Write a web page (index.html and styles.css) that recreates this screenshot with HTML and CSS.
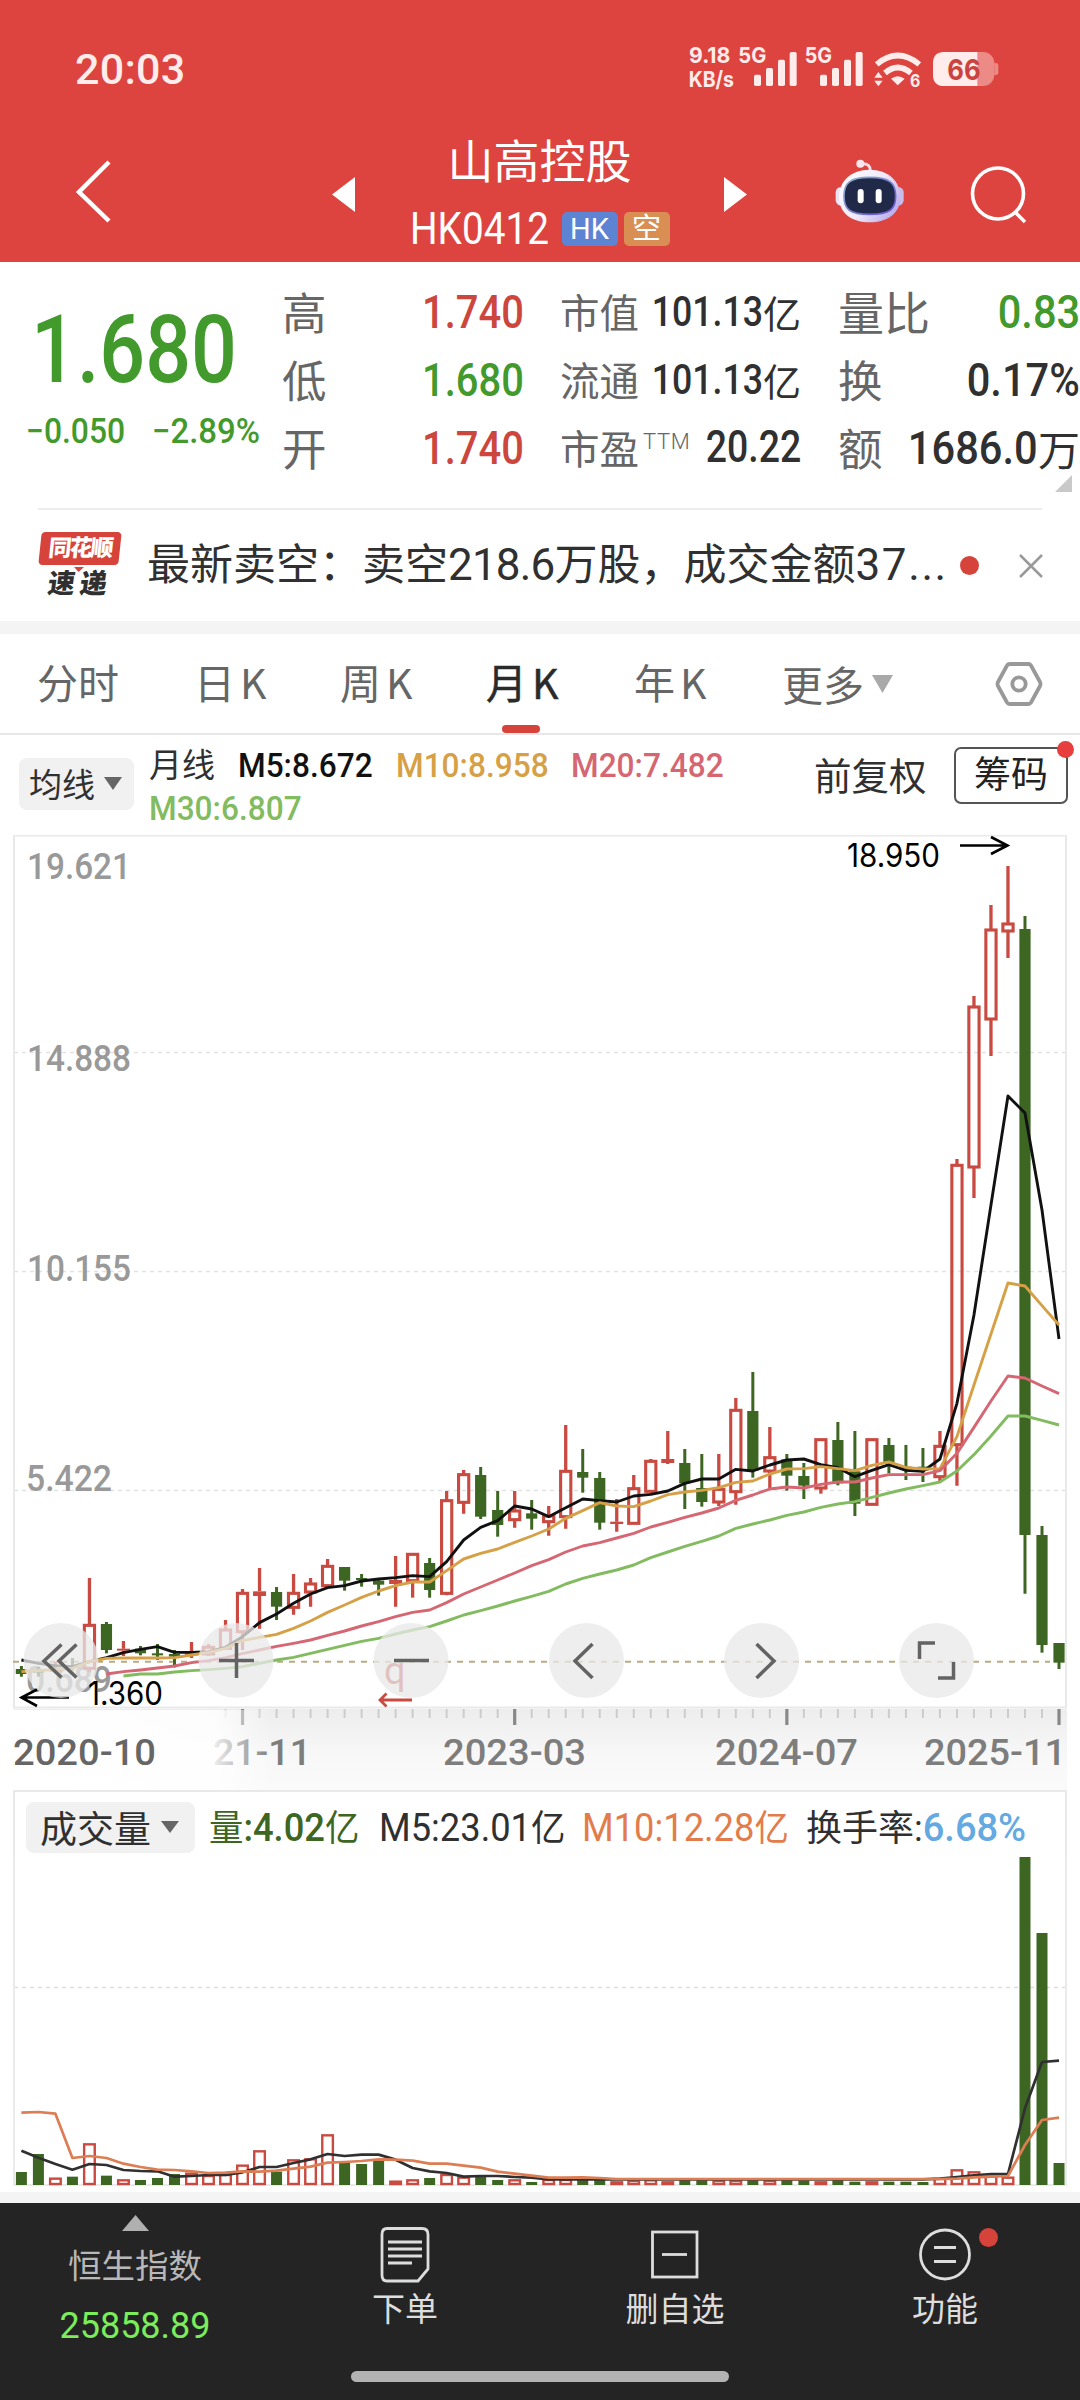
FILE: index.html
```html
<!DOCTYPE html>
<html lang="zh-CN">
<head>
<meta charset="utf-8">
<title>山高控股 HK0412</title>
<link rel="stylesheet" href="styles.css">
</head>
<body>
<header class="header">
  <div class="status">
    <span class="time">20:03</span>
    <svg class="status-icons" width="314" height="46" viewBox="141 42 942 138" fill="#ffeceb">
      <g class="status-text">
        <text x="147" y="100" textLength="124">9.18</text>
        <text x="146" y="170" textLength="136">KB/s</text>
        <text x="295" y="100" textLength="84">5G</text>
        <text x="494" y="100" textLength="82">5G</text>
      </g>
      <g id="bars"><rect x="342" y="134" width="21" height="34" rx="5"/><rect x="378" y="114" width="21" height="54" rx="5"/><rect x="414" y="89" width="21" height="79" rx="5"/><rect x="449" y="66" width="21" height="102" rx="5"/></g>
      <use href="#bars" x="198"/>
      <g fill="none" stroke="#ffeceb" stroke-width="17">
        <path d="M710 103Q773 50 838 103"/><path d="M735 129Q773 96 813 129"/>
      </g>
      <path d="M753 146Q773 131 794 146L773 166ZM703 143L715 126L728 143ZM703 152L715 169L728 152Z"/>
      <text class="wifi-six" x="810" y="172" textLength="31">6</text>
      <rect x="879" y="66" width="184" height="102" rx="34" fill="#ec8a86"/>
      <path d="M1063 99h5q7 0 7 8v20q0 8-7 8h-5z" fill="#ec8a86"/>
      <path d="M1012 66H913Q879 66 879 100V134Q879 168 913 168H1012Z"/>
      <text class="battery" x="922" y="149" textLength="100">66</text>
    </svg>
  </div>
  <div class="nav">
    <svg class="back" width="40" height="66" viewBox="0 0 40 66"><path d="M36 4L6 34L36 63" fill="none" stroke="#fff" stroke-width="4.5"/></svg>
    <svg class="prev" width="23" height="35"><path d="M23 0V35L0 17.500Z" fill="#fff"/></svg>
    <div class="title">
      <div class="name">山高控股</div>
      <div class="code"><span class="code-text">HK0412</span><span class="badge hk">HK</span><span class="badge short">空</span></div>
    </div>
    <svg class="next" width="23" height="35"><path d="M0 0V35L23 17.500Z" fill="#fff"/></svg>
    <svg class="robot" width="70" height="64" viewBox="586 388 210 192">
      <defs>
        <linearGradient id="shell" x2="1" y2=".6"><stop offset="0" stop-color="#fff"/><stop offset=".6" stop-color="#f0e9f8"/><stop offset="1" stop-color="#bfb2ec"/></linearGradient>
        <linearGradient id="rim" x2="1" y2="1"><stop offset="0" stop-color="#8eb3c9"/><stop offset="1" stop-color="#6650d2"/></linearGradient>
      </defs>
      <path d="M692 424Q693 402 668 402" fill="none" stroke="#f5dfe8" stroke-width="9"/>
      <circle cx="662" cy="402" r="12" fill="#f8e6ee"/>
      <rect x="588" y="472" width="34" height="56" rx="16" fill="#e9e3f4"/><rect x="758" y="472" width="34" height="56" rx="16" fill="#c8bde8"/>
      <path d="M690 420C746 420 782 455 782 502C782 552 742 578 690 578C638 578 598 552 598 502C598 455 634 420 690 420Z" fill="url(#shell)"/>
      <path d="M690 443C750 443 768 460 768 499C768 540 750 554 690 554C630 554 613 540 613 499C613 460 630 443 690 443Z" fill="#212948" stroke="url(#rim)" stroke-width="5"/>
      <rect x="654" y="478" width="18" height="43" rx="9" fill="#fff"/><rect x="708" y="478" width="18" height="43" rx="9" fill="#fff"/>
    </svg>
    <svg class="search" width="58" height="58" viewBox="0 0 58 58" fill="none" stroke="#fff" stroke-width="3.6"><circle cx="28" cy="27.500" r="25.500"/><path d="M45 46L55 56"/></svg>
  </div>
</header>

<section class="quote">
  <div class="price">
    <div class="last"><span class="fit">1.680</span></div>
    <div class="change"><span class="fit">−0.050</span><span class="fit">−2.89%</span></div>
  </div>
  <dl class="stats wide">
    <dt>高</dt><dd class="up"><span class="fit">1.740</span></dd>
    <dt>低</dt><dd class="down"><span class="fit">1.680</span></dd>
    <dt>开</dt><dd class="up"><span class="fit">1.740</span></dd>
  </dl>
  <dl class="stats mid">
    <dt>市值</dt><dd><span class="fit">101.13</span><i>亿</i></dd>
    <dt>流通</dt><dd><span class="fit">101.13</span><i>亿</i></dd>
    <dt>市盈<sup>TTM</sup></dt><dd class="pe"><span class="fit">20.22</span></dd>
  </dl>
  <dl class="stats last-col">
    <dt>量比</dt><dd class="down"><span class="fit">0.83</span></dd>
    <dt>换</dt><dd><span class="fit">0.17%</span></dd>
    <dt>额</dt><dd><span class="fit">1686.0</span><i>万</i></dd>
  </dl>
  <svg class="corner" width="17" height="17"><path d="M17 0V17H0Z" fill="#c9c9c9"/></svg>
</section>

<section class="news">
  <div class="news-logo"><div class="logo-top">同花顺</div><div class="logo-bottom">速递</div></div>
  <span class="headline">最新卖空：卖空<b>218.6</b>万股，成交金额<b class="amount">37...</b></span>
  <span class="dot"></span>
  <svg class="close" width="24" height="24"><path d="M1 1L23 23M23 1L1 23" stroke="#999" stroke-width="2.500"/></svg>
</section>

<nav class="tabs">
  <span>分时</span><span>日K</span><span>周K</span><span class="active">月K</span><span>年K</span>
  <span class="more">更多<svg width="21" height="18"><path d="M0 0H21L10.500 18Z" fill="#a9a9a9"/></svg></span>
  <svg class="gear" width="48" height="46" viewBox="0 0 48 46" fill="none" stroke="#999" stroke-width="3.800"><path d="M14.500 3H33.500Q35 3 36 4.500L45 21Q46 23 45 25L36 41.500Q35 43 33.500 43H14.500Q13 43 12 41.500L3 25Q2 23 3 21L12 4.500Q13 3 14.500 3Z"/><circle cx="24" cy="23" r="6.700"/></svg>
</nav>

<section class="indicators">
  <div class="chip ma-chip">均线<svg width="18" height="13"><path d="M0 0H18L9 13Z" fill="#666"/></svg></div>
  <div class="ma-list">
    <span class="period">月线</span><span class="ma ma5">M5:8.672</span><span class="ma ma10">M10:8.958</span><span class="ma ma20">M20:7.482</span><span class="ma ma30">M30:6.807</span>
  </div>
  <span class="adjust">前复权</span>
  <div class="chips-btn">筹码<i class="dot"></i></div>
</section>

<svg class="chart" width="1080" height="955" viewBox="0 835 1080 955">
  <defs>
    <linearGradient id="shade" x1="0" x2="0" y1="0" y2="1"><stop offset="0" stop-color="#ededed"/><stop offset=".6" stop-color="#f8f8f8"/><stop offset="1" stop-color="#fafafa"/></linearGradient>
    <linearGradient id="fade"><stop offset="0" stop-color="#fff"/><stop offset=".78" stop-color="#fff" stop-opacity=".85"/><stop offset="1" stop-color="#fff" stop-opacity="0"/></linearGradient>
  </defs>
  <rect x="14" y="1709" width="1053" height="81" fill="url(#shade)"/>
  <g stroke="#e2e2e2" stroke-width="1.500" stroke-dasharray="4 4"><path d="M14 1052.500H1066M14 1271.500H1066M14 1490.500H1066"/></g>
  <rect x="14" y="835.500" width="1052" height="872" fill="none" stroke="#e9e9e9" stroke-width="2"/>
  <g class="scale-labels">
    <text x="27" y="879" textLength="104">19.621</text><text x="27" y="1070.500" textLength="104">14.888</text>
    <text x="27" y="1281" textLength="104">10.155</text><text x="26" y="1490.500" textLength="86">5.422</text>
    <text x="26" y="1692" textLength="86">0.689</text>
  </g>
  <path d="M13 1661.700H1050" stroke="#b9aa85" stroke-width="2" stroke-dasharray="6 6"/>
  <g id="candles"></g>
  <g id="averages"></g>
  <g class="marks"><text x="847" y="866.500" textLength="93">18.950</text><text x="88" y="1705" textLength="75">1.360</text></g>
  <g fill="none" stroke="#000" stroke-width="2.600"><path d="M960 845.500H1007M991 837L1007.500 845.500L991 854M69 1697.500H22M37 1689.500L21.500 1697.500L37 1706"/></g>
  <text class="mark-q" x="384" y="1684">q</text>
  <path d="M412 1700H380M386.500 1693.500L380 1700L386.500 1706.500" fill="none" stroke="#c84a40" stroke-width="2.800"/>
  <g id="ticks"></g>
  <g class="dates">
    <text x="213" y="1765" textLength="98">21-11</text><text x="443" y="1765" textLength="143">2023-03</text>
    <text x="715" y="1765" textLength="143">2024-07</text><text x="924" y="1765" textLength="142">2025-11</text>
  </g>
  <rect x="12" y="1710" width="260" height="80" fill="url(#fade)"/>
  <g class="dates first"><text x="13" y="1765" textLength="143">2020-10</text></g>
  <g fill="#e8e8e8" fill-opacity=".76"><circle cx="61" cy="1660.500" r="37.500"/><circle cx="236" cy="1660.500" r="37.500"/><circle cx="411" cy="1660.500" r="37.500"/><circle cx="586.500" cy="1660.500" r="37.500"/><circle cx="761.500" cy="1660.500" r="37.500"/><circle cx="936.500" cy="1660.500" r="37.500"/></g>
  <g fill="none" stroke="#636363" stroke-width="3.500"><path d="M61.500 1644.500L44 1661L61.500 1677.500M76.500 1644.500L59 1661L76.500 1677.500M219 1660.500H254M236.500 1643V1678M394 1660.500H429M592.500 1644L575 1661L592.500 1678M756.500 1644L774 1661L756.500 1678M919.500 1659V1643H935M953.500 1662V1678H938"/></g>
</svg>

<section class="volume">
  <div class="volume-head">
    <div class="chip">成交量<svg width="18" height="12"><path d="M0 0H18L9 12Z" fill="#666"/></svg></div>
    <span class="v-now">量<b>:4.02</b>亿</span><span class="v-m5"><b>M5:23.01</b>亿</span><span class="v-m10"><b>M10:12.28</b>亿</span><span class="v-rate">换手率:<em>6.68%</em></span>
  </div>
  <svg class="volume-chart" width="1080" height="335" viewBox="0 1855 1080 335">
    <path d="M14 1987.500H1066" stroke="#ddd" stroke-width="1.500" stroke-dasharray="4 4"/>
    <path d="M14 1855V2185H1066V1855" fill="none" stroke="#ebebeb" stroke-width="2"/>
    <g id="volumes"></g>
  </svg>
</section>

<footer class="footer">
  <div class="index"><svg width="27" height="16"><path d="M0 16L13.500 0L27 16Z" fill="#b0b0b0"/></svg><span class="index-name">恒生指数</span><span class="index-value">25858.89</span></div>
  <div class="action"><svg width="54" height="60" viewBox="0 0 54 60" fill="none" stroke="#ddd" stroke-width="2.800"><path d="M9 4.500H44Q50 4.500 50 10.500V45L40 57H9Q4 57 4 51V10.500Q4 4.500 9 4.500Z"/><path d="M10 18H44M10 25H44M10 32H44M10 39H34"/></svg><span>下单</span></div>
  <div class="action"><svg width="54" height="60" viewBox="0 0 54 60" fill="none" stroke="#ddd" stroke-width="2.800"><rect x="4.500" y="8" width="44.500" height="45"/><path d="M14 30.500H39"/></svg><span>删自选</span></div>
  <div class="action"><svg width="54" height="60" viewBox="0 0 54 60" fill="none" stroke="#ddd" stroke-width="2.800"><circle cx="27" cy="30.500" r="24.500"/><path d="M16 23.500H38M16 37.500H38"/></svg><span>功能</span><i class="dot"></i></div>
  <div class="home-bar"></div>
</footer>
<script src="chart.js"></script>
</body>
</html>
```
FILE: styles.css
```css
* { box-sizing: border-box; }
body { margin: 0; width: 1080px; height: 2400px; overflow: hidden; background: #fff; color: #303030; font-family: Roboto, "Noto Sans CJK SC", sans-serif; display: flex; flex-direction: column; }
body > * { flex: none; }
svg { display: block; flex: none; }
i, em { font-style: normal; }
b { font-weight: 400; }
.fit { display: inline-block; transform: scaleX(.85); transform-origin: right center; font-weight: 500; }
.dot { display: block; width: 19px; height: 19px; border-radius: 50%; background: #d6433b; flex: none; }

.header { height: 262px; background: #dd443f; color: #fff; }
.status { height: 130px; padding: 44px 79px 0 75px; display: flex; justify-content: space-between; }
.time { font-size: 43px; line-height: 51px; font-weight: 500; letter-spacing: .3px; color: #ffeceb; }
.status-icons { overflow: visible; }
.status-text text { font: 700 66px Inter, sans-serif; }
.wifi-six { font: 700 50px Inter, sans-serif; }
.battery { font: 700 87px Inter, sans-serif; fill: #cb433e; }
.nav { height: 132px; display: flex; align-items: flex-start; }
.back { margin: 28px 0 0 73px; }
.prev { margin: 47px 0 0 219px; }
.title { width: 369px; display: flex; flex-direction: column; align-items: center; }
.name { font-size: 46px; line-height: 60px; margin-top: 2px; }
.code { display: flex; align-items: center; height: 34px; margin-top: 20px; width: 260px; }
.code-text { width: 152px; font-size: 44px; line-height: 34px; transform: scaleX(.88); transform-origin: left; }
.badge { height: 34px; border-radius: 5px; display: flex; align-items: center; justify-content: center; font-size: 29px; line-height: 34px; }
.badge.hk { width: 56px; background: #5d83d3; }
.badge.short { width: 46px; margin-left: 6px; background: #d98f54; }
.next { margin: 47px 0 0 0; }
.robot { margin: 29px 0 0 88px; }
.search { margin: 36px 0 0 65px; }

.quote { height: 246px; display: grid; grid-template-columns: 282px 279px 277px 242px; padding-top: 15px; position: relative; }
.price { color: #439a2c; }
.last { font-size: 95px; line-height: 100px; padding: 23px 0 0 31px; }
.last .fit, .change .fit { transform-origin: left center; }
.change { display: flex; padding: 12px 0 0 26px; font-size: 35px; line-height: 40px; }
.change .fit { width: 126px; transform: scaleX(.91); }
.change .fit + .fit { transform: scaleX(.94); }
.stats { margin: 0; display: grid; grid-template-columns: 44px 1fr; grid-auto-rows: 68px; align-items: center; }
dt { font-size: 44.500px; color: #666; white-space: nowrap; margin-top: -2px; }
dd { margin: 0; display: flex; align-items: center; justify-content: flex-end; font-size: 47px; white-space: nowrap; }
dd .fit { margin-left: -20px; }
.wide, .mid { padding-right: 37px; }
.mid { margin-left: -1px; }
.mid dt { font-size: 39.500px; }
.mid dd { font-size: 42px; }
.mid dd.pe { font-size: 44px; }
.mid i { font-size: 38px; }
.mid dt sup { font-size: 22px; line-height: 0; vertical-align: 15px; font-weight: 300; margin-left: 4px; letter-spacing: .7px; }
.last-col dt:first-child { font-size: 46px; }
.last-col i { font-size: 42px; }
.last-col .fit { transform: scaleX(.885); }
.up { color: #cc463d; }
.down { color: #439a2c; }
.corner { position: absolute; right: 8px; bottom: 16px; }

.news { height: 113px; margin: 0 38px; border-top: 2px solid #ededed; display: flex; align-items: center; }
.news-logo { width: 84px; height: 68px; display: flex; flex-direction: column; align-items: center; font-weight: 900; flex: none; }
.logo-top { position: relative; width: 80px; height: 35px; border-radius: 4px; background: #d6433b; color: #fff; font-size: 23px; line-height: 33px; text-align: center; transform: skewX(-6deg); letter-spacing: -2px; }
.logo-top::after { content: ""; position: absolute; left: 36px; top: 35px; border: 5px solid transparent; border-top-color: #d6433b; border-bottom: 0; }
.logo-bottom { font-size: 27px; line-height: 38px; transform: skewX(-8deg); letter-spacing: 5px; }
.headline { width: 802px; margin: 0 0 9px 25px; font-size: 43px; white-space: nowrap; }
.headline b { font-size: 44px; letter-spacing: -.8px; }
.headline .amount { letter-spacing: 1.600px; }
.news .dot { margin-left: 12px; }
.close { margin-left: 40px; }

.tabs { height: 114px; border-top: 13px solid #f4f4f4; border-bottom: 2px solid #e7e7e7; padding-left: 37px; display: flex; align-items: center; font-size: 41px; color: #666; font-family: "Noto Sans CJK SC", sans-serif; }
.tabs > span { width: 148px; height: 99px; line-height: 95px; letter-spacing: 5px; white-space: nowrap; }
.tabs > span:nth-child(1) { width: 157px; letter-spacing: 0; }
.tabs > span:nth-child(2), .tabs > span:nth-child(3) { width: 146px; }
.tabs > .active { color: #2a2a2a; -webkit-text-stroke: .5px #2a2a2a; display: flex; flex-direction: column; }
.active::after { content: ""; width: 38px; height: 9px; border-radius: 4px; background: #d6433b; margin: -4px 0 0 16px; }
.tabs > .more { display: flex; align-items: center; width: 213px; letter-spacing: 0; }
.more svg { margin-left: 8px; }

.indicators { height: 100px; padding-left: 19px; display: flex; align-items: flex-start; }
.chip { background: #f1f1f1; border-radius: 8px; display: flex; align-items: center; white-space: nowrap; }
.ma-chip { width: 115px; height: 52px; margin-top: 23px; padding: 0 0 2px 10px; font-size: 33px; flex: none; }
.ma-chip svg { margin-left: 9px; }
.ma-list { width: 640px; margin: 9px 0 0 15px; display: flex; flex-wrap: wrap; line-height: 43px; font-size: 33px; flex: none; }
.period { width: 89px; }
.ma { display: block; width: 158px; font-size: 34px; font-weight: 500; transform: scaleX(.93); transform-origin: left; color: #111; }
.ma10, .ma20 { width: 175px; }
.ma10 { color: #d5a046; }
.ma20 { color: #d56672; }
.ma30 { color: #82bb60; }
.adjust { margin: 16px 0 0 25px; font-size: 37.500px; line-height: 53px; width: 140px; white-space: nowrap; flex: none; }
.chips-btn { position: relative; width: 114px; height: 57px; margin-top: 12px; border: 2px solid #555; border-radius: 7px; font-size: 37px; line-height: 53px; text-align: center; color: #222; white-space: nowrap; flex: none; }
.chips-btn .dot { position: absolute; top: -8px; right: -8px; width: 17px; height: 17px; background: #e73e3e; }

.scale-labels text { font: 500 37px Roboto, sans-serif; fill: #999; }
.marks text { font: 400 32px Inter, sans-serif; fill: #000; }
.mark-q { font: 400 38px Roboto, sans-serif; fill: #c84a40; }
.dates text { font: 500 37px Roboto, sans-serif; fill: #7d7d7d; }
.dates.first text { fill: #666; }

.volume { height: 402px; }
.volume-head { width: 1054px; height: 65px; margin: 0 13px; padding: 8px 0 0 11px; border: 2px solid #e9e9e9; border-bottom: 0; display: flex; align-items: center; font-size: 36px; white-space: nowrap; }
.volume-head .chip { width: 169px; height: 51px; padding: 0 0 2px 14px; font-size: 37px; }
.volume-head .chip svg { margin-left: 10px; }
.volume-head span { flex: none; line-height: 48px; margin-top: 1px; }
.v-now, .v-m5, .v-m10 { transform-origin: left; transform: scaleX(.955); }
.volume-head .v-now { color: #3d6623; margin-left: 14px; width: 170px; }
.v-m5 { width: 203px; }
.v-m10 { color: #e27c4b; width: 224px; }
.volume-head b { font-size: 38px; }
.v-now b { font-weight: 500; }
.v-rate em { color: #64a9e2; font-size: 38px; font-weight: 500; }

.footer { flex: 1; background: #242424; border-top: 11px solid #f4f4f4; display: grid; grid-template-columns: repeat(4, 270px); grid-template-rows: 168px auto; color: #ddd; }
.index, .action { display: flex; flex-direction: column; align-items: center; position: relative; white-space: nowrap; }
.index { padding-top: 12px; }
.index-name { font-size: 33.500px; line-height: 50px; margin-top: 11px; color: #b8b8b8; }
.index-value { font-size: 36px; line-height: 40px; margin-top: 14px; color: #7bed5b; }
.action { padding-top: 21px; }
.action span { font-size: 33px; line-height: 44px; margin-top: 4px; }
.action .dot { position: absolute; left: 169px; top: 25px; }
.home-bar { grid-column: 1 / -1; justify-self: center; width: 378px; height: 11px; border-radius: 6px; background: #b3b3b3; }
```
FILE: chart.js
```js
const RED = '#c84a40', GREEN = '#3d6623';
const x = i => 21.4 + i * 17.01;
const y = v => 1300 + v / 3;
const vy = v => 1780 + v / 3;

// [direction, wick top, body top, body bottom, wick bottom]
const candles = [
  'g',1098,1107,1122,1130,'g',1100,1112,1118,1130,'r',1085,1105,1115,1120,'g',1074,1098,1104,1112,
  'r',834,976,1105,1115,'g',966,972,1050,1060,'r',1023,1046,1052,1068,'g',1038,1046,1060,1066,
  'g',1032,1060,1066,1080,'g',1050,1062,1070,1102,'r',1026,1060,1066,1074,'r',1033,1042,1062,1067,
  'r',960,990,1045,1050,'r',867,880,995,1050,'r',804,874,888,986,'g',861,876,920,960,
  'r',822,880,922,944,'r',834,852,876,920,'r',777,799,857,862,'g',801,801,842,872,
  'g',822,834,839,860,'g',836,842,854,887,'r',768,840,852,920,'r',763,763,842,893,
  'g',774,789,870,893,'r',573,602,880,886,'r',510,524,607,641,'g',501,525,650,657,
  'g',573,630,675,710,'r',573,633,659,683,'g',600,640,656,689,'r',618,648,665,707,
  'r',375,514,650,686,'g',447,516,533,578,'g',516,534,668,689,'r',597,665,672,695,
  'r',525,566,670,670,'r',477,484,574,580,'r',393,477,489,492,'g',447,489,550,627,
  'g',462,564,606,620,'r',462,568,606,618,'r',294,331,575,614,'g',216,333,512,533,
  'r',381,473,513,565,'g',462,478,527,572,'g',489,528,557,597,'r',419,419,564,581,
  'g',366,420,550,556,'g',393,514,611,648,'r',419,419,613,613,'g',414,435,490,520,
  'g',435,500,506,540,'g',444,500,512,546,'r',393,439,530,543,'r',-423,-404,434,557,
  'r',-912,-879,-399,-306,'r',-1185,-1110,-843,-732,'r',-1302,-1128,-1107,-1026,
  'g',-1152,-1113,705,881,'g',678,705,1035,1058,'g',1029,1029,1088,1107
];
let out = '';
for (let i = 0; i * 5 < candles.length; i++) {
  const [d, h, t, b, l] = candles.slice(i * 5, i * 5 + 5);
  const cx = x(i);
  if (d === 'g') {
    out += `<path d="M${cx} ${y(h)}V${y(l)}" stroke="${GREEN}" stroke-width="3"/><rect x="${cx - 5.6}" y="${y(t)}" width="11.2" height="${Math.max(2, y(b) - y(t))}" fill="${GREEN}"/>`;
  } else {
    const solid = b - t < 15;
    out += `<path d="M${cx} ${y(h)}V${y(t)}M${cx} ${y(b)}V${y(l)}" stroke="${RED}" stroke-width="3.3"/>`;
    out += solid
      ? `<rect x="${cx - 6.5}" y="${y(t)}" width="13" height="${y(b) - y(t)}" fill="${RED}"/>`
      : `<rect x="${cx - 5.1}" y="${y(t)}" width="10.2" height="${y(b) - y(t)}" fill="none" stroke="${RED}" stroke-width="3.1"/>`;
  }
}
document.getElementById('candles').innerHTML = out;

const line = (vals, start, color, f, w) =>
  `<polyline fill="none" stroke="${color}" stroke-width="${w}" stroke-linejoin="round" points="${vals.map((v, i) => x(i + start) + ',' + f(v)).join(' ')}"/>`;

const ma30 = [1128,1122,1122,1116,1112,1109,1105,1100,1090,1080,1072,1060,1048,1036,1024,1015,1002,990,980,963,945,932,918,903,889,874,852,835,822,810,795,773,756,739,724,708,685,672,660,646,636,622,612,605,592,579,567,557,546,513,464,408,348,348,361,375];
const ma20 = [1122,1115,1110,1104,1098,1088,1082,1073,1061,1050,1039,1030,1020,1006,993,978,965,950,937,930,908,882,861,840,819,797,779,756,738,728,714,700,681,667,652,639,624,601,585,567,561,564,553,546,546,534,524,524,524,512,460,382,303,228,234,258,281];
const ma10 = [1115,1112,1108,1105,1085,1075,1074,1074,1074,1073,1065,1057,1045,1022,1012,1003,985,963,937,915,892,873,857,846,846,812,777,760,747,727,708,687,655,632,608,618,620,603,584,576,571,563,547,543,522,507,506,500,506,512,496,486,502,507,506,410,255,102,-51,-42,17,75];
const ma5 = [1080,1090,1097,1100,1085,1073,1058,1048,1040,1057,1057,1055,1042,1010,968,942,910,882,863,857,843,837,833,827,830,785,720,682,662,618,627,650,623,597,602,606,588,583,573,550,537,537,508,513,495,480,477,494,503,530,511,494,511,514,477,310,45,-285,-612,-561,-270,117];
document.getElementById('averages').innerHTML =
  line(ma5, 0, '#111', y, 2.9) + line(ma10, 0, '#d5a046', y, 2.9) +
  line(ma20, 5, '#d56672', y, 2.9) + line(ma30, 6, '#82bb60', y, 2.9);

let ticks = '';
for (let i = 12; i < 62; i++) {
  const major = (i - 13) % 16 === 0;
  ticks += `<path d="M${x(i)} 1709V${major ? 1725 : 1718}" stroke="${major ? '#888' : '#ccc'}" stroke-width="${major ? 3.2 : 2}"/>`;
}
document.getElementById('ticks').innerHTML = ticks;

const vols = [1176,1122,1193,1190,1090,1187,1198,1200,1194,1182,1178,1185,1182,1154,1111,1175,1138,1135,1063,1148,1152,1138,1202,1198,1194,1182,1190,1186,1200,1198,1206,1197,1197,1198,1198,1204,1200,1198,1204,1200,1200,1200,1200,1200,1200,1200,1201,1204,1200,1205,1204,1205,1205,1206,1194,1168,1174,1186,1190,231,459,1149];
const volGreen = new Set([0,1,3,5,7,8,9,15,19,20,21,24,27,28,30,33,34,39,40,43,45,46,48,49,51,52,53,59,60,61]);
let bars = '';
vols.forEach((v, i) => {
  bars += volGreen.has(i)
    ? `<rect x="${x(i) - 5.5}" y="${vy(v)}" width="11" height="${2185 - vy(v)}" fill="${GREEN}"/>`
    : `<rect x="${x(i) - 5.3}" y="${vy(v) + 1}" width="10.6" height="${2184 - vy(v) - 1}" fill="${v > 1201 ? RED : '#fff'}" stroke="${RED}" stroke-width="2.4"/>`;
});
const flat = (n, v) => Array(n).fill(v);
const vma5 = [1112,1133,1152,1169,1152,1155,1170,1173,1174,1190,1188,1185,1185,1177,1161,1161,1149,1138,1122,1128,1124,1124,1139,1164,1174,1179,1190,1188,1188,1191,1193,...flat(23,1198),1196,1191,1186,1182,1182,985,846,842];
const vma10 = [998,996,1001,1134,1128,1134,1151,1161,1169,1170,1174,1179,1178,1174,1175,1172,1166,1160,1148,1146,1143,1138,1139,1142,1151,1151,1157,1163,1175,1181,1187,1193,1193,1192,1194,...flat(19,1197),1197,1196,1192,1190,1188,1095,1020,1013];
document.getElementById('volumes').innerHTML = bars + line(vma5, 0, '#303030', vy, 2.7) + line(vma10, 0, '#dc7d54', vy, 2.7);

document.querySelectorAll('text[textLength]').forEach(t => t.setAttribute('lengthAdjust', 'spacingAndGlyphs'));
```
